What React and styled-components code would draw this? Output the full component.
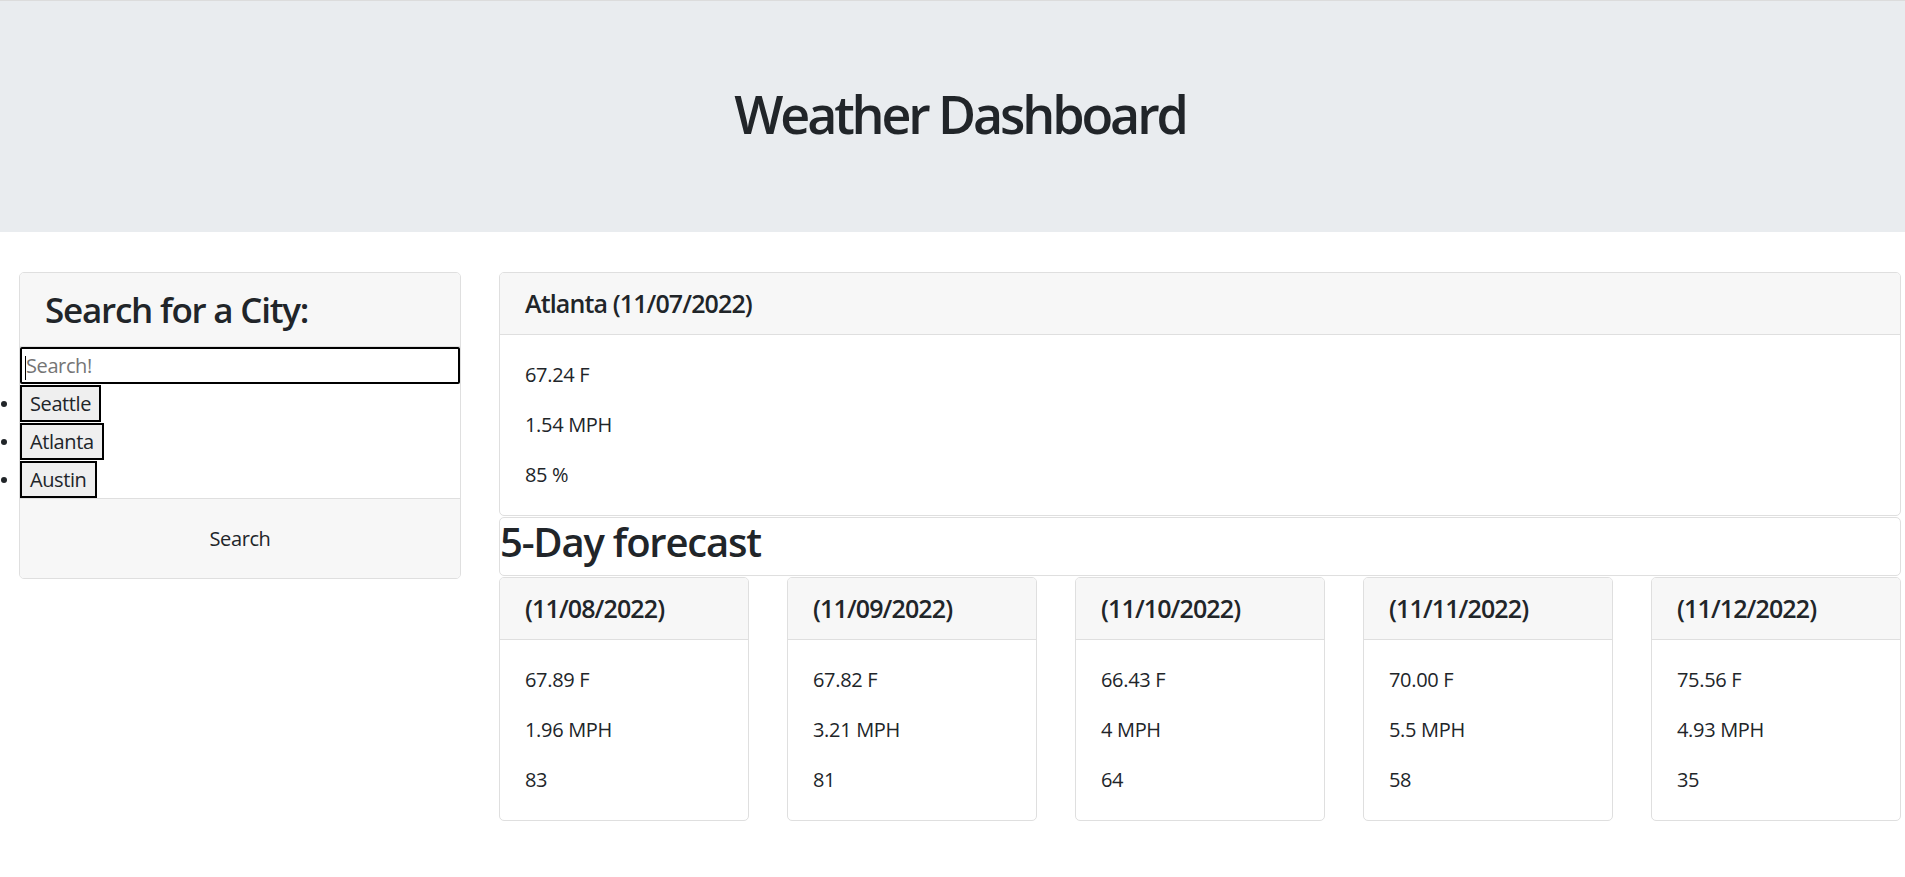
import React from 'react';
import styled, { createGlobalStyle } from 'styled-components';

const GlobalStyle = createGlobalStyle`
  *, *::before, *::after {
    box-sizing: border-box;
  }
  body {
    margin: 0;
    background: #ffffff;
    color: #212529;
    font-family: "Open Sans", "Noto Sans", "Liberation Sans", sans-serif;
    letter-spacing: -0.02em;
  }
`;

const current = {
  city: 'Atlanta',
  date: '11/07/2022',
  temp: '67.24 F',
  wind: '1.54 MPH',
  humidity: '85 %',
};

const forecast = [
  { date: '11/08/2022', temp: '67.89 F', wind: '1.96 MPH', humidity: '83' },
  { date: '11/09/2022', temp: '67.82 F', wind: '3.21 MPH', humidity: '81' },
  { date: '11/10/2022', temp: '66.43 F', wind: '4 MPH', humidity: '64' },
  { date: '11/11/2022', temp: '70.00 F', wind: '5.5 MPH', humidity: '58' },
  { date: '11/12/2022', temp: '75.56 F', wind: '4.93 MPH', humidity: '35' },
];

const history = ['Seattle', 'Atlanta', 'Austin'];

export default function App() {
  return (
    <>
      <GlobalStyle />
      <Jumbotron>
        <Title>Weather Dashboard</Title>
      </Jumbotron>
      <Main>
        <Sidebar>
          <CardHeader $size={35} $line={43}>
            Search for a City:
          </CardHeader>
          <InputWrap>
            <SearchInput type='text' placeholder='Search!' />
            <Caret />
          </InputWrap>
          <CityList>
            {history.map((city) => (
              <CityItem key={city}>
                <CityButton>{city}</CityButton>
              </CityItem>
            ))}
          </CityList>
          <CardFooter>
            <SearchButton>Search</SearchButton>
          </CardFooter>
        </Sidebar>

        <Content>
          <Card>
            <CardHeader $size={25} $line={31}>
              {current.city} ({current.date})
            </CardHeader>
            <CardBody>
              <Stat>{current.temp}</Stat>
              <Stat>{current.wind}</Stat>
              <Stat>{current.humidity}</Stat>
            </CardBody>
          </Card>

          <ForecastTitleBox>
            <ForecastTitle>5-Day forecast</ForecastTitle>
          </ForecastTitleBox>

          <ForecastRow>
            {forecast.map((day) => (
              <ForecastCard key={day.date}>
                <CardHeader $size={25} $line={31}>
                  ({day.date})
                </CardHeader>
                <CardBody>
                  <Stat>{day.temp}</Stat>
                  <Stat>{day.wind}</Stat>
                  <Stat>{day.humidity}</Stat>
                </CardBody>
              </ForecastCard>
            ))}
          </ForecastRow>
        </Content>
      </Main>
    </>
  );
}

const Jumbotron = styled.header`
  height: 232px;
  padding: 81px 0 0 15px;
  border-top: 1px solid #dcdcdc;
  background-color: #e9ecef;
  text-align: center;
`;

const Title = styled.h1`
  margin: 0;
  font-size: 52px;
  line-height: 64px;
  font-weight: 600;
  letter-spacing: -0.06em;
`;

const Main = styled.main`
  display: flex;
  align-items: flex-start;
  gap: 38px;
  padding: 40px 4px 40px 19px;
`;

const Card = styled.div`
  display: flex;
  flex-direction: column;
  background-color: #ffffff;
  border: 1px solid #dfdfdf;
  border-radius: 5px;
`;

const Sidebar = styled(Card)`
  width: 442px;
  flex-shrink: 0;
`;

const CardHeader = styled.div`
  padding: 15px 25px;
  background-color: #f7f7f7;
  border-bottom: 1px solid #dfdfdf;
  border-radius: 4px 4px 0 0;
  font-size: ${(props) => props.$size}px;
  line-height: ${(props) => props.$line}px;
  font-weight: 600;
  letter-spacing: -0.035em;
`;

const InputWrap = styled.div`
  position: relative;
`;

const SearchInput = styled.input`
  display: block;
  width: 100%;
  height: 37px;
  padding: 0 4px;
  border: 2px solid #000000;
  border-radius: 2px;
  font-family: inherit;
  font-size: 20px;
  letter-spacing: -0.02em;
  color: #212529;
  outline: none;

  &::placeholder {
    color: #757575;
  }
`;

const Caret = styled.span`
  position: absolute;
  left: 5px;
  top: 9px;
  width: 1px;
  height: 24px;
  background-color: #000000;
`;

const CityList = styled.ul`
  margin: 0;
  padding: 0;
  list-style: none;
`;

const CityItem = styled.li`
  position: relative;
  height: 38px;
  padding-top: 1px;

  &::before {
    content: '';
    position: absolute;
    left: -19px;
    top: 17px;
    width: 6px;
    height: 6px;
    border-radius: 50%;
    background-color: #212529;
  }
`;

const CityButton = styled.button`
  height: 37px;
  padding: 0 8px;
  border: 2px solid #000000;
  background-color: #efefef;
  font-family: inherit;
  font-size: 20px;
  letter-spacing: -0.02em;
  color: #212529;
`;

const CardFooter = styled.div`
  display: flex;
  align-items: center;
  justify-content: center;
  height: 80px;
  background-color: #f7f7f7;
  border-top: 1px solid #dfdfdf;
  border-radius: 0 0 4px 4px;
`;

const SearchButton = styled.button`
  padding: 0;
  border: none;
  background: transparent;
  font-family: inherit;
  font-size: 20px;
  line-height: 30px;
  letter-spacing: -0.02em;
  color: #212529;
`;

const Content = styled.div`
  flex: 1;
  display: flex;
  flex-direction: column;
  gap: 1px;
`;

const CardBody = styled.div`
  padding: 25px;
`;

const Stat = styled.p`
  margin: 0 0 20px;
  font-size: 20px;
  line-height: 30px;

  &:last-child {
    margin-bottom: 0;
  }
`;

const ForecastTitleBox = styled.div`
  border: 1px solid #dfdfdf;
  border-radius: 5px;
`;

const ForecastTitle = styled.h2`
  margin: 0 0 9px;
  font-size: 40px;
  line-height: 48px;
  font-weight: 600;
  letter-spacing: -0.03em;
`;

const ForecastRow = styled.div`
  display: flex;
  gap: 38px;
`;

const ForecastCard = styled(Card)`
  flex: 1;
`;
